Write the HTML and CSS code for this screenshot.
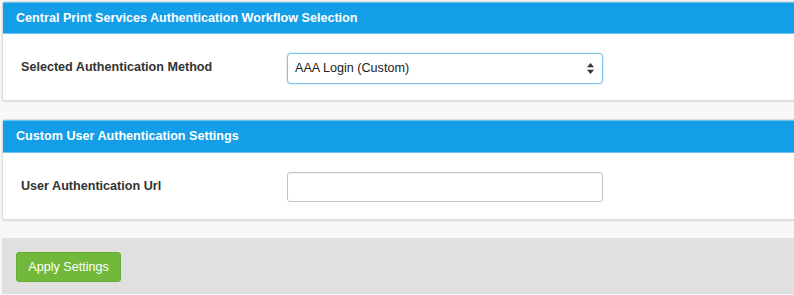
FILE: index.html
```html
<!DOCTYPE html>
<html lang="en">
<head>
  <meta charset="UTF-8" />
  <title>Authentication Settings</title>
  <link rel="stylesheet" href="styles.css">
</head>
<body>
  <div class="page">
    <div class="panel">
      <div class="panel-heading">Central Print Services Authentication Workflow Selection</div>
      <div class="panel-body">
        <label class="field-label" for="authMethod">Selected Authentication Method</label>
        <div class="select-wrap">
          <select id="authMethod" class="field select-field">
            <option>AAA Login (Custom)</option>
          </select>
          <svg class="select-arrows" width="7" height="11" viewBox="0 0 7 11">
            <path d="M3.5 0 L7 4.2 H0 Z" fill="#333"/>
            <path d="M3.5 11 L7 6.8 H0 Z" fill="#333"/>
          </svg>
        </div>
      </div>
    </div>

    <div class="panel">
      <div class="panel-heading panel-heading-tall">Custom User Authentication Settings</div>
      <div class="panel-body">
        <label class="field-label" for="authUrl">User Authentication Url</label>
        <input type="text" id="authUrl" class="field text-field" />
      </div>
    </div>

    <div class="footer">
      <button type="button" class="btn-apply">Apply Settings</button>
    </div>
  </div>
</body>
</html>
```

FILE: styles.css
```css
* {
  margin: 0;
  padding: 0;
  box-sizing: border-box;
}

body {
  font-family: "Liberation Sans", Arial, sans-serif;
  background-color: #f8f8f8;
  color: #333;
  overflow: hidden;
}

.page {
  padding: 1px 0 0 2px;
  width: 800px;
}

.panel {
  background-color: #fff;
  border: 1px solid #dcdcdc;
  border-radius: 3px;
  box-shadow: 0 1px 2px rgba(0, 0, 0, 0.12);
  margin-bottom: 18px;
  overflow: hidden;
}

.panel-heading {
  background-color: #149ee8;
  border-top: 1px solid #6cc3f0;
  border-bottom: 1px solid #6cc3f0;
  color: #fff;
  font-size: 12.6px;
  font-weight: bold;
  height: 32px;
  line-height: 30px;
  padding-left: 13px;
}

.panel-heading-tall {
  height: 33px;
  line-height: 31px;
}

.panel-body {
  display: flex;
  align-items: center;
  height: 66px;
  padding: 2px 0 0 18px;
}

.field-label {
  width: 266px;
  font-size: 12.6px;
  font-weight: bold;
  color: #333;
  padding-bottom: 2px;
}

.field {
  width: 316px;
  font-family: "Liberation Sans", Arial, sans-serif;
  font-size: 12.6px;
  background-color: #fff;
  color: #222;
}

.select-wrap {
  position: relative;
}

.select-field {
  -webkit-appearance: none;
  appearance: none;
  height: 31px;
  border: 1px solid #7fc3e6;
  border-radius: 4px;
  box-shadow: 0 0 2px rgba(80, 170, 225, 0.5);
  padding-left: 7px;
  outline: none;
}

.select-arrows {
  position: absolute;
  right: 9px;
  top: 10px;
}

.text-field {
  height: 30px;
  border: 1px solid #c4c4c4;
  border-radius: 3px;
  box-shadow: inset 0 1px 1px rgba(0, 0, 0, 0.05);
}

.footer {
  background-color: #e0e0e0;
  height: 56px;
  margin-top: 1px;
  padding: 14px 0 0 14px;
}

.btn-apply {
  background-color: #72b83a;
  border: 1px solid #68ad33;
  border-radius: 3px;
  color: #fff;
  font-family: "Liberation Sans", Arial, sans-serif;
  font-size: 12.6px;
  height: 30px;
  width: 105px;
}
```
